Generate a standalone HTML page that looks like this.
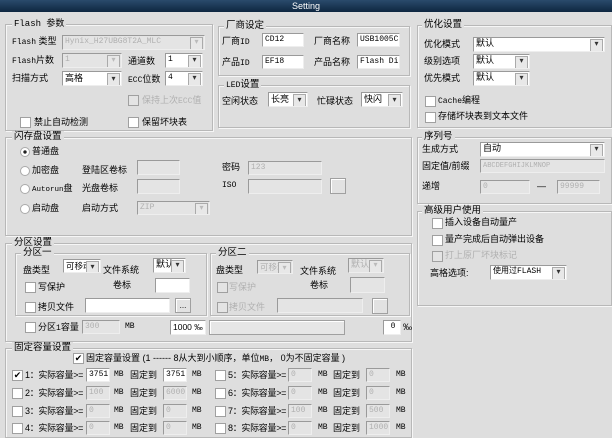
<!DOCTYPE html>
<html><head><meta charset="utf-8"><style>
*{margin:0;padding:0;box-sizing:border-box}
body{width:612px;height:432px;overflow:hidden;background:#dedede;font-family:"Liberation Sans","Noto Sans CJK SC",sans-serif;font-size:9px;color:#000;position:relative}
.a{position:absolute;white-space:nowrap;line-height:12px}
.t{position:absolute;left:0;top:0;width:612px;height:12px;background:linear-gradient(#2a4a6c,#0e2640);color:#fff;font-size:9px;text-align:center;line-height:12px}
.g{position:absolute;border:1px solid #b8b8b8;box-shadow:inset 1px 1px 0 #f6f6f6,1px 1px 0 #f6f6f6}
.gl{position:absolute;background:#dedede;padding:0 2px;line-height:12px;white-space:nowrap;font-size:9.5px}
.i{position:absolute;background:#fff;border:1px solid #9a9a9a;border-right-color:#eee;border-bottom-color:#eee;font-size:8px;line-height:12px;padding-left:2px;white-space:nowrap;overflow:hidden;font-family:"Liberation Mono","Noto Sans CJK SC",monospace}
.d{background:#e4e4e4;color:#b0b0b0}
.s::after{content:"▾";position:absolute;right:1px;top:1px;width:11px;height:11px;background:#e8e8e8;border:1px solid #aaa;font-size:8px;line-height:9px;text-align:center;color:#333}
.d.s::after{color:#bbb}
.c{position:absolute;width:11px;height:11px;background:#fff;border:1px solid #a0a0a0;font-size:9px;line-height:9px;text-align:center}
.cd{background:#e4e4e4}
.r{position:absolute;width:10px;height:10px;border-radius:50%;background:#fff;border:1px solid #aaa}
.gr{color:#b0b0b0}
.b{position:absolute;border:1px solid #a0a0a0;background:#e2e2e2;box-shadow:inset 1px 1px 0 #fff}
.mono{font-family:"Liberation Mono","Noto Sans CJK SC",monospace;font-size:8px}
.n{letter-spacing:-0.3px}
</style></head><body>
<div class="t">Setting</div>

<div class="g" style="left:5px;top:24px;width:208px;height:107px"></div>
<div class="gl mono" style="left:12px;top:18px;font-size:9px">Flash 参数</div>
<div class="a" style="left:12px;top:35px"><span class="mono">Flash</span> 类型</div>
<div class="i d s" style="left:62px;top:35px;width:143px;height:15px">Hynix_H27UBG8T2A_MLC</div>
<div class="a" style="left:12px;top:54px"><span class="mono">Flash</span>片数</div>
<div class="i d s" style="left:62px;top:53px;width:60px;height:15px">1</div>
<div class="a" style="left:128px;top:55px">通道数</div>
<div class="i s" style="left:165px;top:53px;width:38px;height:15px">1</div>
<div class="a" style="left:12px;top:72px">扫描方式</div>
<div class="i s" style="left:62px;top:71px;width:60px;height:15px;font-family:'Liberation Sans','Noto Sans CJK SC',sans-serif;font-size:9px">高格</div>
<div class="a" style="left:128px;top:73px"><span class="mono">ECC</span>位数</div>
<div class="i s" style="left:165px;top:71px;width:38px;height:15px">4</div>
<div class="c cd" style="left:128px;top:95px"></div><div class="a gr" style="left:142px;top:94px">保持上次<span class="mono">ECC</span>值</div>
<div class="c" style="left:20px;top:117px"></div><div class="a" style="left:34px;top:116px">禁止自动检测</div>
<div class="c" style="left:128px;top:117px"></div><div class="a" style="left:142px;top:116px">保留坏块表</div>

<div class="g" style="left:218px;top:26px;width:192px;height:50px"></div>
<div class="gl" style="left:224px;top:20px">厂商设定</div>
<div class="a" style="left:222px;top:35px">厂商<span class="mono">ID</span></div>
<div class="i" style="left:262px;top:33px;width:42px;height:14px">CD12</div>
<div class="a" style="left:314px;top:35px">厂商名称</div>
<div class="i" style="left:357px;top:33px;width:43px;height:14px">USB1005C</div>
<div class="a" style="left:222px;top:56px">产品<span class="mono">ID</span></div>
<div class="i" style="left:262px;top:55px;width:42px;height:14px">EF18</div>
<div class="a" style="left:314px;top:56px">产品名称</div>
<div class="i" style="left:357px;top:55px;width:43px;height:14px">Flash Dis</div>
<div class="g" style="left:218px;top:85px;width:192px;height:43px"></div>
<div class="gl" style="left:224px;top:79px"><span class="mono">LED</span>设置</div>
<div class="a" style="left:222px;top:95px">空闲状态</div>
<div class="i s" style="left:268px;top:92px;width:40px;height:15px;font-family:'Liberation Sans','Noto Sans CJK SC',sans-serif;font-size:9px">长亮</div>
<div class="a" style="left:317px;top:95px">忙碌状态</div>
<div class="i s" style="left:361px;top:92px;width:42px;height:15px;font-family:'Liberation Sans','Noto Sans CJK SC',sans-serif;font-size:9px">快闪</div>

<div class="g" style="left:417px;top:25px;width:195px;height:103px"></div>
<div class="gl" style="left:422px;top:19px">优化设置</div>
<div class="a" style="left:424px;top:38px">优化模式</div>
<div class="i s" style="left:473px;top:37px;width:132px;height:15px;font-size:9px">默认</div>
<div class="a" style="left:424px;top:55px">级别选项</div>
<div class="i s" style="left:473px;top:54px;width:57px;height:15px;font-size:9px">默认</div>
<div class="a" style="left:424px;top:72px">优先模式</div>
<div class="i s" style="left:473px;top:71px;width:57px;height:15px;font-size:9px">默认</div>
<div class="c" style="left:425px;top:96px"></div><div class="a" style="left:438px;top:94px"><span class="mono">Cache</span>编程</div>
<div class="c" style="left:425px;top:112px"></div><div class="a" style="left:438px;top:110px">存储坏块表到文本文件</div>

<div class="g" style="left:417px;top:137px;width:195px;height:67px"></div>
<div class="gl" style="left:422px;top:131px">序列号</div>
<div class="a" style="left:422px;top:143px">生成方式</div>
<div class="i s" style="left:480px;top:142px;width:125px;height:15px;font-size:9px">自动</div>
<div class="a" style="left:422px;top:160px">固定值/前缀</div>
<div class="i d" style="left:480px;top:159px;width:125px;height:14px;font-size:7px">ABCDEFGHIJKLMNOP</div>
<div class="a" style="left:422px;top:180px">递增</div>
<div class="i d" style="left:480px;top:180px;width:50px;height:14px">0</div>
<div class="a" style="left:537px;top:180px">—</div>
<div class="i d" style="left:557px;top:180px;width:43px;height:14px">99999</div>

<div class="g" style="left:417px;top:211px;width:195px;height:95px"></div>
<div class="gl" style="left:422px;top:205px">高级用户使用</div>
<div class="c" style="left:432px;top:218px"></div><div class="a" style="left:445px;top:216px">插入设备自动量产</div>
<div class="c" style="left:432px;top:235px"></div><div class="a" style="left:445px;top:233px">量产完成后自动弹出设备</div>
<div class="c cd" style="left:432px;top:251px"></div><div class="a gr" style="left:445px;top:249px">打上原厂坏块标记</div>
<div class="a" style="left:430px;top:267px">高格选项:</div>
<div class="i s" style="left:490px;top:265px;width:77px;height:15px">使用过FLASH</div>

<div class="g" style="left:5px;top:137px;width:407px;height:99px"></div>
<div class="gl" style="left:12px;top:131px">闪存盘设置</div>
<div class="r" style="left:20px;top:147px;background:radial-gradient(#222 25%,#fff 35%)"></div><div class="a" style="left:32px;top:145px">普通盘</div>
<div class="r" style="left:20px;top:166px"></div><div class="a" style="left:32px;top:164px">加密盘</div>
<div class="r" style="left:20px;top:184px"></div><div class="a" style="left:32px;top:182px"><span class="mono" style="font-size:7.5px">Autorun</span>盘</div>
<div class="r" style="left:20px;top:204px"></div><div class="a" style="left:32px;top:202px">启动盘</div>
<div class="a" style="left:82px;top:164px">登陆区卷标</div>
<div class="i d" style="left:137px;top:160px;width:43px;height:15px"></div>
<div class="a" style="left:82px;top:182px">光盘卷标</div>
<div class="i d" style="left:137px;top:179px;width:43px;height:15px"></div>
<div class="a" style="left:82px;top:202px">启动方式</div>
<div class="i d s" style="left:137px;top:201px;width:73px;height:14px">ZIP</div>
<div class="a" style="left:222px;top:161px">密码</div>
<div class="i d" style="left:248px;top:161px;width:74px;height:14px">123</div>
<div class="a mono" style="left:222px;top:180px">ISO</div>
<div class="i d" style="left:248px;top:179px;width:74px;height:15px"></div>
<div class="b" style="left:330px;top:178px;width:16px;height:16px"></div>

<div class="g" style="left:5px;top:243px;width:407px;height:99px"></div>
<div class="gl" style="left:12px;top:237px">分区设置</div>
<div class="g" style="left:15px;top:253px;width:192px;height:63px"></div>
<div class="gl" style="left:21px;top:247px">分区一</div>
<div class="a" style="left:23px;top:264px">盘类型</div>
<div class="i s" style="left:63px;top:259px;width:38px;height:14px;font-size:8.5px;font-family:'Liberation Sans','Noto Sans CJK SC',sans-serif">可移动</div>
<div class="a" style="left:103px;top:264px">文件系统</div>
<div class="i s" style="left:153px;top:258px;width:33px;height:15px;font-size:9px">默认</div>
<div class="c" style="left:25px;top:282px"></div><div class="a" style="left:38px;top:281px">写保护</div>
<div class="a" style="left:113px;top:279px">卷标</div>
<div class="i" style="left:155px;top:278px;width:35px;height:15px"></div>
<div class="c" style="left:25px;top:302px"></div><div class="a" style="left:38px;top:301px">拷贝文件</div>
<div class="i" style="left:85px;top:298px;width:85px;height:15px"></div>
<div class="b" style="left:175px;top:298px;width:16px;height:15px;font-size:8px;text-align:center;line-height:13px">...</div>
<div class="g" style="left:210px;top:253px;width:200px;height:63px"></div>
<div class="gl" style="left:216px;top:247px">分区二</div>
<div class="a" style="left:216px;top:264px">盘类型</div>
<div class="i d s" style="left:257px;top:260px;width:36px;height:14px;font-size:8.5px;font-family:'Liberation Sans','Noto Sans CJK SC',sans-serif">可移动</div>
<div class="a" style="left:300px;top:265px">文件系统</div>
<div class="i d s" style="left:348px;top:258px;width:36px;height:15px;font-size:9px">默认</div>
<div class="c cd" style="left:217px;top:282px"></div><div class="a gr" style="left:229px;top:281px">写保护</div>
<div class="a" style="left:310px;top:279px">卷标</div>
<div class="i d" style="left:350px;top:277px;width:35px;height:16px"></div>
<div class="c cd" style="left:217px;top:302px"></div><div class="a gr" style="left:229px;top:301px">拷贝文件</div>
<div class="i d" style="left:277px;top:298px;width:86px;height:15px"></div>
<div class="b" style="left:372px;top:298px;width:16px;height:16px"></div>
<div class="c" style="left:25px;top:322px"></div><div class="a" style="left:38px;top:321px">分区<span class="mono">1</span>容量</div>
<div class="i d" style="left:82px;top:320px;width:38px;height:14px">300</div>
<div class="a mono" style="left:125px;top:321px">MB</div>
<div class="i" style="left:170px;top:320px;width:36px;height:15px;font-family:'Liberation Sans',sans-serif;font-size:8.5px">1000 ‰</div>
<div class="b" style="left:209px;top:320px;width:136px;height:15px;background:#e6e6e6"></div>
<div class="i" style="left:383px;top:320px;width:18px;height:15px;text-align:center">0</div>
<div class="a" style="left:403px;top:321px">‰</div>

<div class="g" style="left:5px;top:348px;width:407px;height:90px"></div>
<div class="gl" style="left:12px;top:342px">固定容量设置</div>
<div class="c" style="left:73px;top:353px">✔</div>
<div class="a" style="left:86px;top:352px">固定容量设置 (1 ------ 8从大到小顺序，单位<span class="mono">MB</span>， 0为不固定容量 )</div>

<div class="c" style="left:12px;top:370px">✔</div><div class="a n" style="left:25px;top:369px">1：实际容量&gt;=</div>
<div class="i" style="left:86px;top:368px;width:24px;height:14px">3751</div><div class="a mono" style="left:114px;top:369px">MB</div>
<div class="a" style="left:130px;top:369px">固定到</div>
<div class="i" style="left:163px;top:368px;width:24px;height:14px">3751</div><div class="a mono" style="left:192px;top:369px">MB</div>

<div class="c" style="left:12px;top:388px"></div><div class="a n" style="left:25px;top:387px">2：实际容量&gt;=</div>
<div class="i d" style="left:86px;top:386px;width:24px;height:14px">100</div><div class="a mono" style="left:114px;top:387px">MB</div>
<div class="a" style="left:130px;top:387px">固定到</div>
<div class="i d" style="left:163px;top:386px;width:24px;height:14px">6000</div><div class="a mono" style="left:192px;top:387px">MB</div>

<div class="c" style="left:12px;top:406px"></div><div class="a n" style="left:25px;top:405px">3：实际容量&gt;=</div>
<div class="i d" style="left:86px;top:404px;width:24px;height:14px">0</div><div class="a mono" style="left:114px;top:405px">MB</div>
<div class="a" style="left:130px;top:405px">固定到</div>
<div class="i d" style="left:163px;top:404px;width:24px;height:14px">0</div><div class="a mono" style="left:192px;top:405px">MB</div>

<div class="c" style="left:12px;top:423px"></div><div class="a n" style="left:25px;top:422px">4：实际容量&gt;=</div>
<div class="i d" style="left:86px;top:421px;width:24px;height:14px">0</div><div class="a mono" style="left:114px;top:422px">MB</div>
<div class="a" style="left:130px;top:422px">固定到</div>
<div class="i d" style="left:163px;top:421px;width:24px;height:14px">0</div><div class="a mono" style="left:192px;top:422px">MB</div>

<div class="c" style="left:215px;top:370px"></div><div class="a n" style="left:228px;top:369px">5：实际容量&gt;=</div>
<div class="i d" style="left:288px;top:368px;width:24px;height:14px">0</div><div class="a mono" style="left:318px;top:369px">MB</div>
<div class="a" style="left:333px;top:369px">固定到</div>
<div class="i d" style="left:366px;top:368px;width:24px;height:14px">0</div><div class="a mono" style="left:396px;top:369px">MB</div>

<div class="c" style="left:215px;top:388px"></div><div class="a n" style="left:228px;top:387px">6：实际容量&gt;=</div>
<div class="i d" style="left:288px;top:386px;width:24px;height:14px">0</div><div class="a mono" style="left:318px;top:387px">MB</div>
<div class="a" style="left:333px;top:387px">固定到</div>
<div class="i d" style="left:366px;top:386px;width:24px;height:14px">0</div><div class="a mono" style="left:396px;top:387px">MB</div>

<div class="c" style="left:215px;top:406px"></div><div class="a n" style="left:228px;top:405px">7：实际容量&gt;=</div>
<div class="i d" style="left:288px;top:404px;width:24px;height:14px">100</div><div class="a mono" style="left:318px;top:405px">MB</div>
<div class="a" style="left:333px;top:405px">固定到</div>
<div class="i d" style="left:366px;top:404px;width:24px;height:14px">500</div><div class="a mono" style="left:396px;top:405px">MB</div>

<div class="c" style="left:215px;top:423px"></div><div class="a n" style="left:228px;top:422px">8：实际容量&gt;=</div>
<div class="i d" style="left:288px;top:421px;width:24px;height:14px">0</div><div class="a mono" style="left:318px;top:422px">MB</div>
<div class="a" style="left:333px;top:422px">固定到</div>
<div class="i d" style="left:366px;top:421px;width:24px;height:14px">1000</div><div class="a mono" style="left:396px;top:422px">MB</div>
</body></html>
